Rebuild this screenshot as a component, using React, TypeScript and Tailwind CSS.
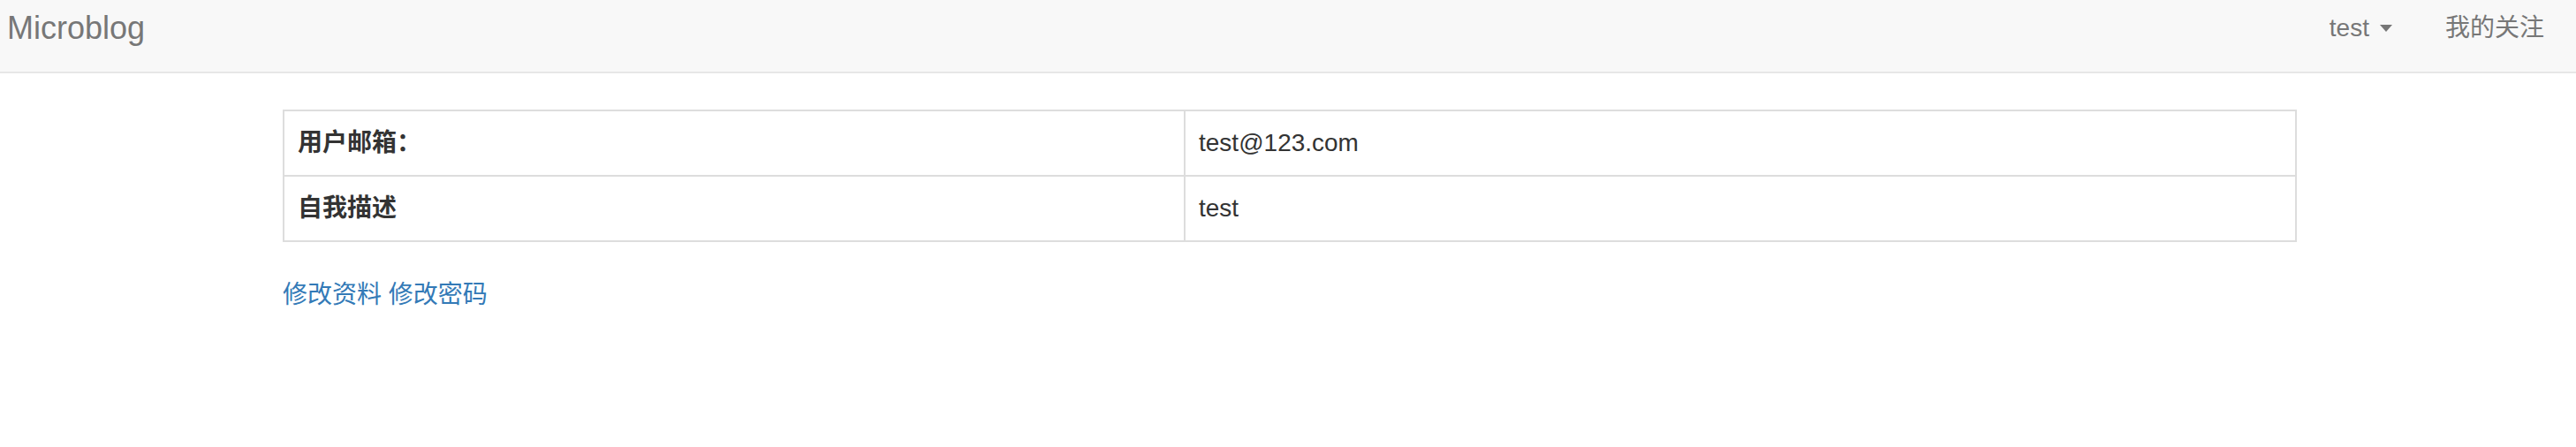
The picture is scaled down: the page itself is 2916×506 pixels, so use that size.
export default function App() {
  const rows = [
    { label: '用户邮箱：', value: 'test@123.com' },
    { label: '自我描述', value: 'test' },
  ]

  return (
    <div
      className="min-h-[506px] bg-white text-[28px] leading-[40px] text-[#333]"
      style={{ fontFamily: '"Liberation Sans", "Noto Sans CJK SC", sans-serif' }}
    >
      {/* Navbar */}
      <nav className="flex h-[83px] items-start justify-between border-b-2 border-[#e7e7e7] bg-[#f8f8f8] pt-[12px]">
        <a className="pl-[8px] text-[36px] leading-[40px] text-[#777]">Microblog</a>
        <ul className="flex pr-[6px] text-[#777]">
          <li className="flex items-center px-[30px]">
            test
            <span className="ml-[12px] inline-block h-0 w-0 border-x-[7px] border-t-[8px] border-x-transparent border-t-[#777]" />
          </li>
          <li className="px-[30px]">我的关注</li>
        </ul>
      </nav>

      {/* Profile table */}
      <div className="ml-[320px] mt-[41px] w-[2280px]">
        <table className="w-full border-collapse border-2 border-[#ddd]">
          <tbody>
            {rows.map((row) => (
              <tr key={row.label}>
                <th className="w-[1020px] border-2 border-[#ddd] px-[15px] py-[16px] text-left font-bold">{row.label}</th>
                <td className="border-2 border-[#ddd] px-[15px] py-[16px]">{row.value}</td>
              </tr>
            ))}
          </tbody>
        </table>

        <p className="mt-[40px] text-[#337ab7]">
          <a>修改资料</a> <a>修改密码</a>
        </p>
      </div>
    </div>
  )
}
